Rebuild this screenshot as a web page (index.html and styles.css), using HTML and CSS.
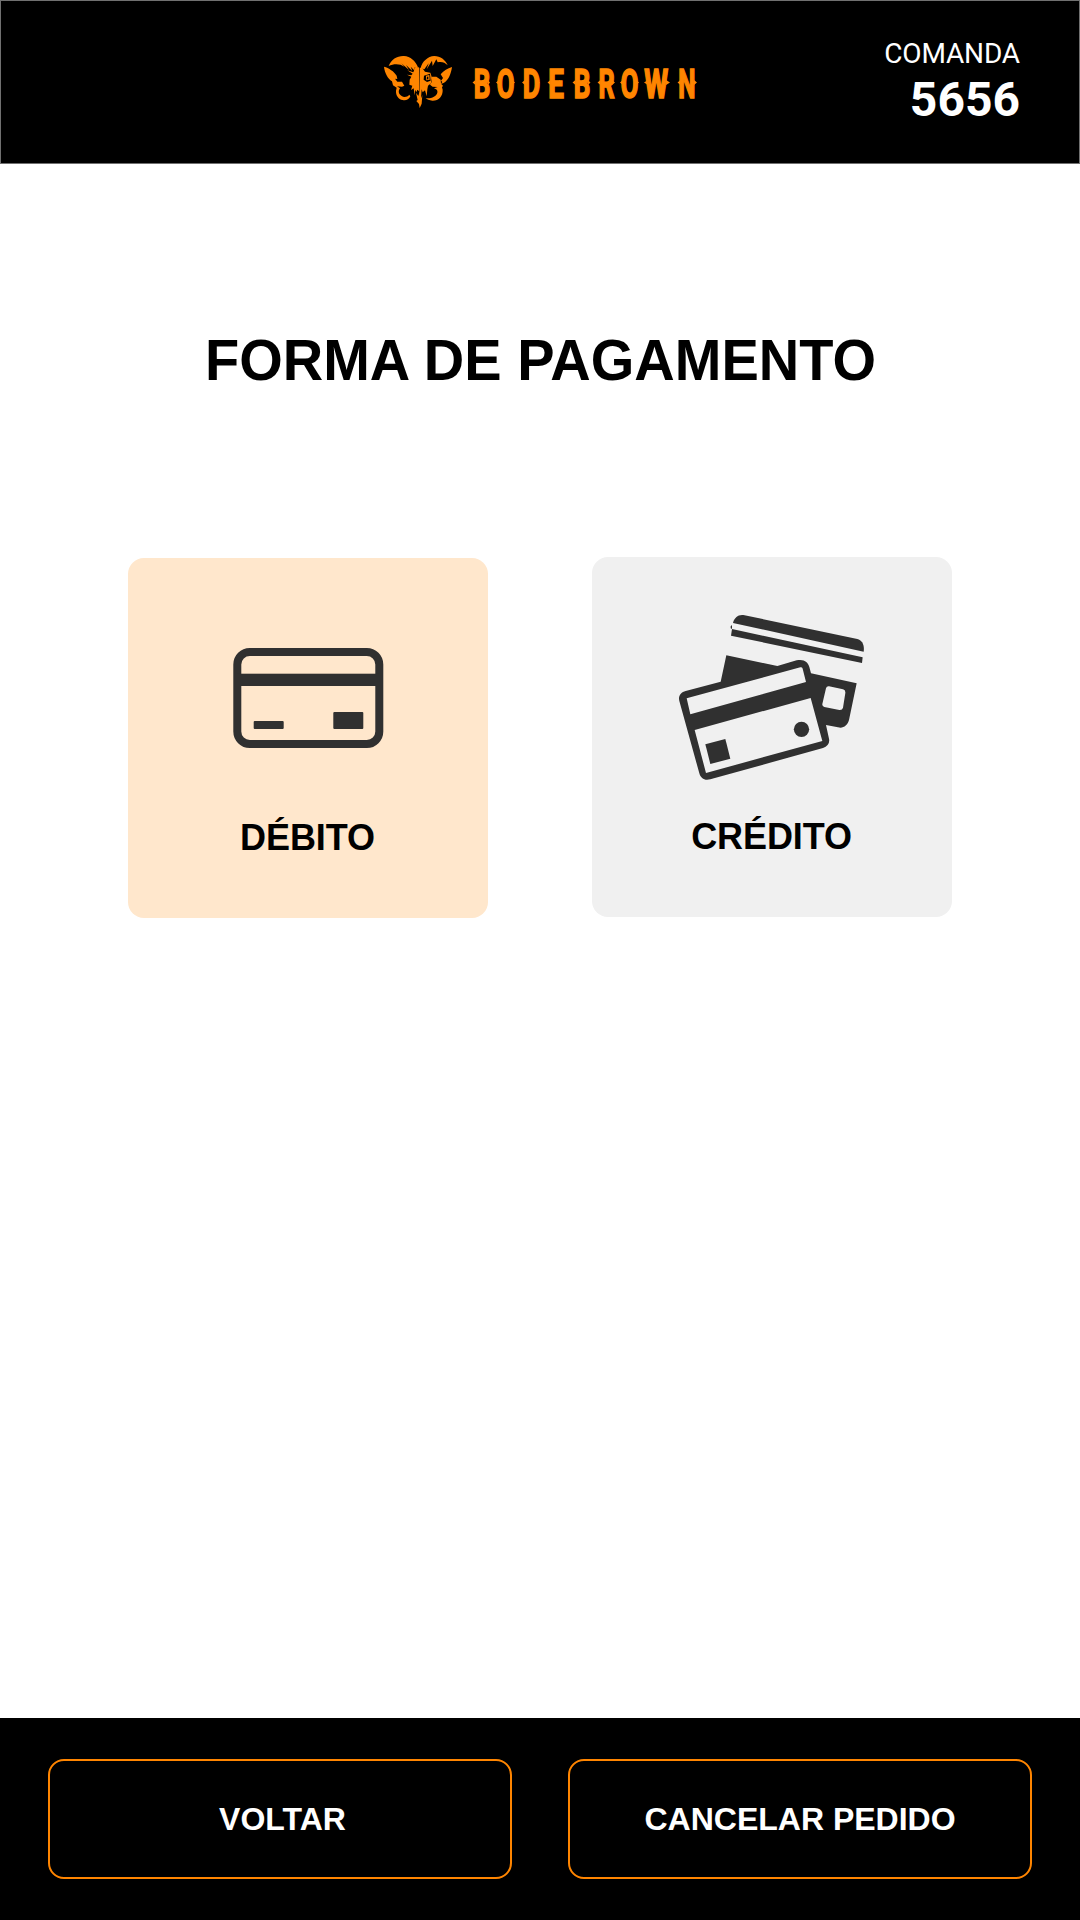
FILE: index.html
```html
<!DOCTYPE html>
<html lang="pt-BR">
<head>
<meta charset="utf-8">
<title>Forma de pagamento</title>
<link rel="stylesheet" href="styles.css">
</head>
<body>
<div class="screen">
  <header class="header">
    <svg class="logo" viewBox="0 0 340 80" role="img" aria-label="Bodebrown">
      <g transform="scale(.33333)">
        <path d="M56 78C64 57 82 47 102 48C121 49 137 63 144 82L140 86L134 82L134 92L122 80L127 93L108 75L117 90L94 70L103 80C91 71 72 70 56 78Z"/>
        <path d="M233 76C226 59 211 48 193 48C173 49 157 64 152 84L163 88L176 70L170 88L186 62L188 78L199 58L203 67C214 64 225 67 233 76Z"/>
        <path d="M42 80C57 84 72 94 80 107L82 117L75 116L82 125L96 125L103 137L96 140L81 139L90 145C83 154 87 164 95 168C102 173 112 171 118 164L121 169C117 178 107 183 98 180C85 178 77 165 78 152L80 143L69 136L66 124C53 116 44 98 42 80Z"/>
        <path d="M246 81C243 101 237 119 221 129L212 132L217 126L213 122L219 114L212 103C222 91 232 86 246 81Z"/>
        <path d="M186 110L199 110L212 119L213 131L219 137L216 142L218 149C219 169 205 183 187 182C178 181 171 179 167 174C181 177 199 170 202 158C204 151 199 147 192 145L203 141L188 140L180 134L185 126Z"/>
        <path d="M112 91L130 97L135 83L147 82V153L141 149V157L136 150L134 166L131 145L123 150L127 137L118 134L119 119L124 110L111 104L124 106L128 101Z"/>
        <path d="M149 83L157 84L165 95L181 98L186 113L183 130L174 137L172 148L170 169L165 151L158 157L155 148L153 175L148 175Z"/>
        <path d="M138 158L145 168L149 155L153 175L157 165L155 191L149 204L147 192L139 183L143 180Z"/>
        <path class="cut" d="M162 107L180 101L182 122L171 126L161 119Z"/>
        <path d="M168 107L178 105L179 119L169 121Z"/>
        <path class="cut" d="M171 110H175V118H171Z"/>
      </g>
      <g class="wordmark">
        <text transform="translate(103.700 57.500) scale(.62 .97)">B</text>
        <text transform="translate(126.700 57.500) scale(.61 .97)">O</text>
        <text transform="translate(152.700 57.500) scale(.64 .97)">D</text>
        <text transform="translate(178.300 57.500) scale(.66 .97)">E</text>
        <text transform="translate(203.700 57.500) scale(.62 .97)">B</text>
        <text transform="translate(228.400 57.500) scale(.6 .97)">R</text>
        <text transform="translate(250.700 57.500) scale(.61 .97)">O</text>
        <text transform="translate(274.300 57.500) scale(.65 .97)">W</text>
        <text transform="translate(308.300 57.500) scale(.58 .97)">N</text>
      </g>
      <path d="M102.500 42.500l3-2.500v5zM118 40l2 2.500-2 2.500zM126 42.500l3-2.500v5zM142 40l3 2.500-3 2.500zM152 42.500l3-2.500v5zM167 40l3 2.500-3 2.500zM177.500 42.500l3-2.500v5zM187 42.500l3-2.500v5zM202.500 42.500l3-2.500v5zM218 40l2.500 2.500-2.500 2.500zM227.500 42.500l3-2.500v5zM242 40l3 2.500-3 2.500zM250 42.500l3-2.500v5zM266 40l3 2.500-3 2.500zM274 42.500l4-2.500v5zM296 40l4 2.500-4 2.500zM307.500 42.500l3-2.500v5zM324 40l3 2.500-3 2.500z"/>
    </svg>
    <div class="order">
      <span class="order-label">COMANDA</span>
      <strong class="order-number">5656</strong>
    </div>
  </header>

  <main class="content">
    <h1 class="title">FORMA DE PAGAMENTO</h1>
    <div class="options">
      <button class="option option-selected">
        <svg class="option-icon" viewBox="0 0 220 210" aria-hidden="true">
          <rect class="outline" x="41.300" y="61" width="142" height="92" rx="12.500"/>
          <rect x="41" y="82.700" width="142" height="12.300"/>
          <rect x="57.700" y="130" width="30" height="8" rx="1"/>
          <rect x="137.300" y="121" width="30" height="17" rx="1"/>
        </svg>
        <span class="option-label">DÉBITO</span>
      </button>
      <button class="option">
        <svg class="option-icon" viewBox="0 0 660 630" aria-hidden="true">
          <path d="M219 99C222 83 235 73 250 75L592 147C606 151 614 164 611 185Z"/>
          <path d="M216 117L608 202L606 219L213 137ZM212 109L216 105V117L212 115Z"/>
          <path fill-rule="evenodd" d="M199 196L352 228L410 211C432 206 444 216 448 231L453 250L590 280L567 390C562 407 550 416 534 412L498 405L507 446C510 459 503 469 489 474L151 568C134 573 122 565 118 550L58 333C54 317 63 307 77 303L182 275ZM80 325L91 373L438 276L428 236Q427 230 421 232ZM104 420L138 549L487 453L452 324ZM507 289Q500 288 498 295L487 342Q486 349 493 351L538 360Q547 361 549 353L556 309Q557 300 549 298Z"/>
          <path d="M136 463L196 447L211 506L151 522Z"/>
          <circle cx="424.500" cy="418" r="23"/>
        </svg>
        <span class="option-label">CRÉDITO</span>
      </button>
    </div>
  </main>

  <footer class="footer">
    <button class="action action-back">VOLTAR</button>
    <button class="action">CANCELAR PEDIDO</button>
  </footer>
</div>
</body>
</html>
```
FILE: styles.css
```css
* { box-sizing: border-box; }
body { margin: 0; background: #fff; }
button { font: inherit; padding: 0; border: 0; }

.screen {
  display: flex;
  flex-direction: column;
  width: 1080px;
  height: 1920px;
  font-family: "Liberation Sans", Arial, sans-serif;
  color: #000;
}

.header {
  display: grid;
  grid-template-columns: 1fr 340px 1fr;
  height: 164px;
  padding: 39px 59px 0;
  background: #000;
  border: 1px solid #707070;
}
.logo {
  grid-column: 2;
  width: 340px;
  height: 80px;
  fill: #ff8500;
}
.logo .cut { fill: #000; }
.wordmark {
  font: 700 42px Roboto, sans-serif;
  stroke: #ff8500;
  stroke-width: 1.8px;
}

.order {
  display: flex;
  flex-direction: column;
  align-items: flex-end;
  color: #fff;
  font-family: Roboto, sans-serif;
}
.order-label { font-size: 28px; line-height: 33px; margin-top: -3px; letter-spacing: -0.15px; }
.order-number { font-size: 48px; line-height: 60px; }

.content {
  flex: 1;
  display: flex;
  flex-direction: column;
  align-items: center;
}
.title {
  margin: 164px 0 0;
  padding-left: 1px;
  font-size: 56px;
  line-height: 64px;
  font-weight: 700;
  transform: scaleY(1.04);
}
.options {
  display: flex;
  gap: 104px;
  margin-top: 165px;
}
.option {
  display: flex;
  flex-direction: column;
  align-items: center;
  width: 360px;
  height: 360px;
  padding-top: 33px;
  border-radius: 16px;
  background: #f0f0f0;
  color: #000;
}
.option-selected { background: #ffe7cc; margin-top: 1px; }
.option-icon { width: 220px; height: 210px; margin-left: -4px; fill: #303030; }
.outline { fill: none; stroke: #303030; stroke-width: 8px; }
.option-label {
  margin-top: 17px;
  padding-right: 1px;
  font-size: 36px;
  line-height: 40px;
  font-weight: 700;
  letter-spacing: -0.1px;
  transform: scaleY(1.04);
}

.footer {
  display: grid;
  grid-template-columns: 464px 464px;
  gap: 56px;
  height: 202px;
  padding: 41px 48px;
  background: #000;
}
.action {
  height: 120px;
  border: 2px solid #ff8500;
  border-radius: 16px;
  background: #000;
  color: #fff;
  font-size: 32px;
  font-weight: 700;
}
.action-back { padding-left: 5px; }
```
